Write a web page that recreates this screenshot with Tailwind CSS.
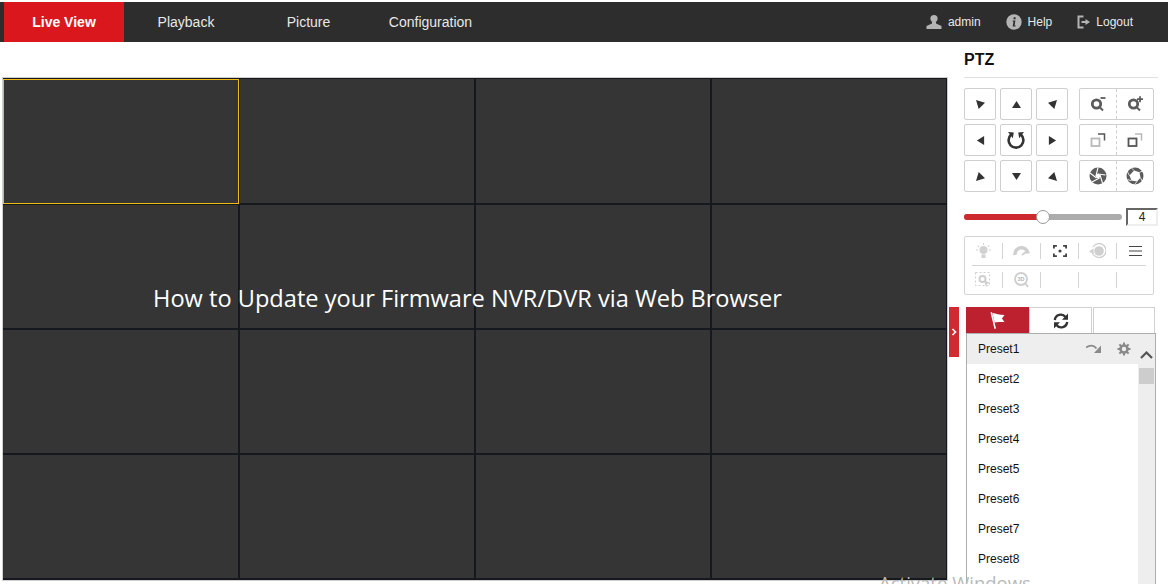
<!DOCTYPE html>
<html lang="en">
<head>
  <meta charset="UTF-8">
  <title>Live View</title>
  <script src="https://cdn.jsdelivr.net/npm/@tailwindcss/browser@4"></script>
</head>
<body class="relative w-[1168px] h-[584px] overflow-hidden bg-white font-['Liberation_Sans',Arial,sans-serif]">
  <!-- top nav -->
  <header class="mt-[2px] h-[40px] bg-[#2d2d2d] flex items-center text-[14px] text-[#e8e8e8]">
    <a class="ml-[4px] w-[120px] h-full bg-[#da171d] flex items-center justify-center font-bold text-white">Live View</a>
    <a class="w-[124px] text-center">Playback</a>
    <a class="w-[121px] text-center">Picture</a>
    <a class="w-[123px] text-center">Configuration</a>
    <div class="ml-auto flex items-center text-[12px] mr-[35px]">
      <svg class="w-[16px] h-[16px] mr-[6px]" viewBox="0 0 16 16" fill="#b4b4b4"><circle cx="8" cy="4.6" r="3.6"/><path d="M6 8h4v1.6l5.5 2.4V15H.5v-3L6 9.6z"/></svg>
      <span>admin</span>
      <svg class="w-[16px] h-[16px] ml-[25px] mr-[6px]" viewBox="0 0 16 16"><circle cx="8" cy="8" r="7.7" fill="#b4b4b4"/><path d="M7.6 3.2h2v2h-2zM6.8 6.6h2.6L8.6 11.6h1v1H6.7l.8-5h-.9z" fill="#2d2d2d"/></svg>
      <span>Help</span>
      <svg class="w-[13px] h-[14px] ml-[25px] mr-[6px]" viewBox="0 0 13 14" fill="none" stroke="#b4b4b4" stroke-width="2"><path d="M6.500 1.500H1.500v11h5"/><path d="M4.500 7h4.500"/><path d="M8.500 4l4.500 3-4.500 3z" fill="#b4b4b4" stroke="none"/></svg>
      <span>Logout</span>
    </div>
  </header>

  <main class="flex">
    <!-- video grid -->
    <section class="ml-[2px] mt-[35px] w-[946px] h-[504px] shrink-0 border border-[#cfcfcf] bg-[#15191d] pt-[1px]">
      <div class="grid grid-cols-[235px_234px_234px_234px] grid-rows-[124px_123px_123px_123px] gap-[2px]">
        <div class="bg-[#353535] w-[236px] h-[125px] border border-[#f0bc13] z-10"></div>
        <div class="bg-[#353535]"></div><div class="bg-[#353535]"></div><div class="bg-[#353535]"></div>
        <div class="bg-[#353535]"></div><div class="bg-[#353535]"></div><div class="bg-[#353535]"></div><div class="bg-[#353535]"></div>
        <div class="bg-[#353535]"></div><div class="bg-[#353535]"></div><div class="bg-[#353535]"></div><div class="bg-[#353535]"></div>
        <div class="bg-[#353535]"></div><div class="bg-[#353535]"></div><div class="bg-[#353535]"></div><div class="bg-[#353535]"></div>
      </div>
    </section>

    <!-- collapse handle -->
    <div class="mt-[265px] ml-[1px] w-[10px] h-[50px] bg-[#cf2a30] flex items-center justify-center shrink-0">
      <svg class="w-[6px] h-[8px]" viewBox="0 0 6 8" fill="none" stroke="#fff" stroke-width="1.6"><path d="M1.5 1l3 3-3 3"/></svg>
    </div>

    <!-- ptz panel -->
    <aside class="ml-[5px] w-[195px] shrink-0">
      <h2 class="mt-[9px] w-[194px] h-[27px] text-[16px] leading-[18px] font-bold text-[#111] border-b border-[#e0e0e0]">PTZ</h2>

      <div class="mt-[10px] flex">
        <div class="grid grid-cols-[repeat(3,32px)] grid-rows-[repeat(3,32px)] gap-[4px]">
          <button class="border border-[#cfcfcf] rounded-[2px] flex items-center justify-center"><svg class="w-[9px] h-[9px]" viewBox="0 0 10 10" fill="#333"><path d="M0 0l10 3-7 7z"/></svg></button>
          <button class="border border-[#cfcfcf] rounded-[2px] flex items-center justify-center"><svg class="w-[9px] h-[9px]" viewBox="0 0 10 10" fill="#333"><path d="M5 1l5 8H0z"/></svg></button>
          <button class="border border-[#cfcfcf] rounded-[2px] flex items-center justify-center"><svg class="w-[9px] h-[9px]" viewBox="0 0 10 10" fill="#333"><path d="M10 0L0 3l7 7z"/></svg></button>
          <button class="border border-[#cfcfcf] rounded-[2px] flex items-center justify-center"><svg class="w-[9px] h-[9px]" viewBox="0 0 10 10" fill="#333"><path d="M1 5l8-5v10z"/></svg></button>
          <button class="border border-[#cfcfcf] rounded-[2px] flex items-center justify-center"><svg class="w-[20px] h-[20px]" viewBox="0 0 20 20" fill="none" stroke="#333" stroke-width="2.6"><path d="M5.200 4.600a7.400 7.400 0 1 0 9.600 0"/><path d="M2 2l5.800.6-1 5.600zM18 2l-5.800.6 1 5.600z" fill="#333" stroke="none"/></svg></button>
          <button class="border border-[#cfcfcf] rounded-[2px] flex items-center justify-center"><svg class="w-[9px] h-[9px]" viewBox="0 0 10 10" fill="#333"><path d="M9 5L1 0v10z"/></svg></button>
          <button class="border border-[#cfcfcf] rounded-[2px] flex items-center justify-center"><svg class="w-[9px] h-[9px]" viewBox="0 0 10 10" fill="#333"><path d="M0 10l10-3L3 0z"/></svg></button>
          <button class="border border-[#cfcfcf] rounded-[2px] flex items-center justify-center"><svg class="w-[9px] h-[9px]" viewBox="0 0 10 10" fill="#333"><path d="M5 9l5-8H0z"/></svg></button>
          <button class="border border-[#cfcfcf] rounded-[2px] flex items-center justify-center"><svg class="w-[9px] h-[9px]" viewBox="0 0 10 10" fill="#333"><path d="M10 10L0 7l7-7z"/></svg></button>
        </div>

        <div class="ml-[11px] w-[75px] grid grid-rows-[repeat(3,32px)] gap-[4px]">
          <div class="flex border border-[#cfcfcf] rounded-[2px]">
            <div class="flex-1 flex items-center justify-center border-r border-dashed border-[#cfcfcf]"><svg class="w-[16px] h-[16px]" viewBox="0 0 16 16" fill="none" stroke="#5c5c5c" stroke-width="2.800"><circle cx="6.500" cy="8" r="4.200"/><path d="M9.500 11l3.500 3.500" stroke-width="2"/><path d="M10.500 2h5" stroke-width="1.800"/></svg></div>
            <div class="flex-1 flex items-center justify-center"><svg class="w-[16px] h-[16px]" viewBox="0 0 16 16" fill="none" stroke="#5c5c5c" stroke-width="2.800"><circle cx="6.500" cy="8" r="4.200"/><path d="M9.500 11l3.500 3.500" stroke-width="2"/><path d="M10 3.200h6M13 .2v6" stroke-width="1.800"/></svg></div>
          </div>
          <div class="flex border border-[#cfcfcf] rounded-[2px]">
            <div class="flex-1 flex items-center justify-center border-r border-dashed border-[#cfcfcf]"><svg class="w-[16px] h-[16px]" viewBox="0 0 16 16" fill="none"><rect x="1.500" y="6.500" width="8" height="7.500" stroke="#b8b8b8" stroke-width="1.800"/><path d="M8 2h6.500v6.500" stroke="#555" stroke-width="1.500"/></svg></div>
            <div class="flex-1 flex items-center justify-center"><svg class="w-[16px] h-[16px]" viewBox="0 0 16 16" fill="none"><rect x="1.500" y="6.500" width="8" height="7.500" stroke="#555" stroke-width="1.800"/><path d="M8 2h6.500v6.500" stroke="#b8b8b8" stroke-width="1.500"/></svg></div>
          </div>
          <div class="flex border border-[#cfcfcf] rounded-[2px]">
            <div class="flex-1 flex items-center justify-center border-r border-dashed border-[#cfcfcf]"><svg class="w-[18px] h-[18px]" viewBox="0 0 18 18"><circle cx="9" cy="9" r="8.500" fill="#5c5c5c"/><path d="M7 9L9 .5M9 7l7.500 1M11 8l2.500 8M10.500 11L3 15M7.500 11L1 6" stroke="#fff" stroke-width="1.100"/><path d="M9 6.500l2.400 1.700-.9 2.800h-3l-.9-2.800z" fill="#fff"/></svg></div>
            <div class="flex-1 flex items-center justify-center"><svg class="w-[18px] h-[18px]" viewBox="0 0 18 18"><circle cx="9" cy="9" r="8.500" fill="#5c5c5c"/><path d="M8 3.500l5.500 1.800 1 5.500-3.500 3.800-5.500-1-2-5z" fill="#fff"/><path d="M8 3.500L5 .5M13.500 5.300L17 4M14.500 10.800l2 4M11 14.600l-3 3.400M5.500 13.600l-4-1M3.500 8.600L1 4" stroke="#fff" stroke-width=".8"/></svg></div>
          </div>
        </div>
      </div>

      <!-- speed slider -->
      <div class="mt-[16px] flex items-center h-[18px]">
        <div class="relative w-[158px] h-[6px] rounded-full bg-[#acacac]">
          <div class="w-[79px] h-full rounded-l-full bg-[#cd2a30]"></div>
          <div class="absolute left-[72px] top-[-4px] w-[14px] h-[14px] rounded-full bg-white border border-[#999]"></div>
        </div>
        <div class="ml-[4px] w-[32px] h-[18px] border-2 border-[#eeeeee] border-t-[#666] border-l-[#666] text-[12px] leading-[14px] text-center text-[#222]">4</div>
      </div>

      <!-- function buttons -->
      <div class="mt-[10px] w-[190px] h-[59px] border border-[#d4d4d4] rounded-[2px]">
        <div class="h-[28px] grid grid-cols-[38px_38px_38px_38px_36px] items-center">
          <div class="h-[16px] flex items-center justify-center border-r border-[#d4d4d4]"><svg class="w-[17px] h-[16px]" viewBox="0 0 17 16" fill="#d2d2d2"><circle cx="8.500" cy="7" r="4"/><rect x="6.500" y="11.500" width="4" height="3.500"/><path d="M8 0h1v2H8zM1 6.500h2v1H1zM14 6.500h2v1h-2zM3 2l1.500 1.500-.7.7L2.300 2.700zM14 2l-1.500 1.500.7.7 1.500-1.500z"/></svg></div>
          <div class="h-[16px] flex items-center justify-center border-r border-[#d4d4d4]"><svg class="w-[17px] h-[14px]" viewBox="0 0 17 14" fill="none" stroke="#cfcfcf"><path d="M2 11a6.500 6.500 0 0 1 13-1.500" stroke-width="3.600"/><path d="M9 11l4-3" stroke-width="1.800"/></svg></div>
          <div class="h-[16px] flex items-center justify-center border-r border-[#d4d4d4]"><svg class="w-[14px] h-[12px]" viewBox="0 0 14 12" fill="none" stroke="#444" stroke-width="1.800"><path d="M.9 3.500V.9h3M10.100.9h3v2.600M13.100 8.500v2.600h-3M3.900 11.100h-3V8.500"/><circle cx="7" cy="6" r="1.600" fill="#444" stroke="none"/></svg></div>
          <div class="h-[16px] flex items-center justify-center border-r border-[#d4d4d4]"><svg class="w-[17px] h-[16px]" viewBox="0 0 17 16"><circle cx="10" cy="8" r="4.800" fill="#cfcfcf"/><path d="M4 4a7 7 0 1 1-.5 6" fill="none" stroke="#cfcfcf" stroke-width="1.300"/><path d="M0 8.500l4.500-3v5.500z" fill="#cfcfcf"/></svg></div>
          <div class="h-[16px] flex items-center justify-center"><svg class="w-[13px] h-[10px]" viewBox="0 0 13 10" stroke="#444"><path d="M0 .5h13M0 5h13M0 9.500h13"/></svg></div>
        </div>
        <div class="mx-[7px] h-[1px] bg-[#d4d4d4]"></div>
        <div class="h-[28px] grid grid-cols-[38px_38px_38px_38px_36px] items-center">
          <div class="h-[16px] flex items-center justify-center border-r border-[#d4d4d4]"><svg class="w-[17px] h-[16px]" viewBox="0 0 17 16" fill="none" stroke="#cfcfcf"><rect x=".5" y=".5" width="14" height="13" stroke-dasharray="2 2"/><circle cx="7.500" cy="7" r="3" stroke-width="2"/><path d="M9 8l6 3-3 1-1 3z" fill="#cfcfcf" stroke="none"/></svg></div>
          <div class="h-[16px] flex items-center justify-center border-r border-[#d4d4d4]"><svg class="w-[15px] h-[16px]" viewBox="0 0 15 16" fill="none" stroke="#cfcfcf"><circle cx="7" cy="7" r="6" stroke-width="1.800"/><path d="M11 11l3 4" stroke-width="1.800"/><text x="7" y="9" font-size="5.500" fill="#b5b5b5" stroke="none" text-anchor="middle" font-weight="bold">3D</text></svg></div>
          <div class="h-[16px] border-r border-[#d4d4d4]"></div>
          <div class="h-[16px] border-r border-[#d4d4d4]"></div>
          <div class="h-[16px]"></div>
        </div>
      </div>

      <!-- preset tabs -->
      <div class="mt-[12px] ml-[2px] w-[189px] h-[26px] flex">
        <div class="w-[63px] bg-[#bd202e] flex items-center justify-center"><svg class="w-[15px] h-[17px]" viewBox="0 0 15 17" fill="#fff"><path d="M.5.500L2 0l4 16.500-1.500.5z"/><path d="M2.500 1c3.500.5 7 2 12 2-1 1.500-2 2.500-2.500 3.500.8 1.200 1.500 2.200 2.500 3.500-4 0-7.500 0-10 .5z"/></svg></div>
        <div class="w-[63px] border-t border-x border-[#d0d0d0] flex items-center justify-center"><svg class="w-[16px] h-[16px]" viewBox="0 0 16 16" fill="none" stroke="#333" stroke-width="2.400"><path d="M1.800 7a6 6 0 0 1 10.700-3M14.200 9a6 6 0 0 1-10.700 3"/><path d="M15 .5v6.200H9zM1 15.500V9.300h6z" fill="#333" stroke="none"/></svg></div>
        <div class="ml-[1px] w-[62px] border-t border-x border-[#d0d0d0]"></div>
      </div>

      <!-- preset list -->
      <div class="ml-[2px] w-[190px] h-[260px] border border-[#aeaeae] flex text-[12px] text-[#111]">
        <ul class="flex-1">
          <li class="h-[30px] pl-[11px] bg-[#eeeeee] flex items-center">
            <span>Preset1</span>
            <svg class="ml-[67px] w-[15px] h-[10px]" viewBox="0 0 15 10" fill="none" stroke="#8a8a8a" stroke-width="1.800"><path d="M0 3.500c4-3 8-2.500 10.500 1"/><path d="M15 1.500V9H8z" fill="#8a8a8a" stroke="none"/></svg>
            <svg class="ml-[16px] w-[14px] h-[14px]" viewBox="0 0 14 14" fill="none" stroke="#8a8a8a"><circle cx="7" cy="7" r="3.500" stroke-width="2.600"/><path d="M7 .5v2.500M7 11v2.500M.5 7H3M11 7h2.500M2.400 2.400l1.800 1.800M9.800 9.800l1.800 1.800M11.600 2.400L9.800 4.200M4.200 9.800l-1.800 1.800" stroke-width="2"/></svg>
          </li>
          <li class="h-[30px] pl-[11px] flex items-center">Preset2</li>
          <li class="h-[30px] pl-[11px] flex items-center">Preset3</li>
          <li class="h-[30px] pl-[11px] flex items-center">Preset4</li>
          <li class="h-[30px] pl-[11px] flex items-center">Preset5</li>
          <li class="h-[30px] pl-[11px] flex items-center">Preset6</li>
          <li class="h-[30px] pl-[11px] flex items-center">Preset7</li>
          <li class="h-[30px] pl-[11px] flex items-center">Preset8</li>
        </ul>
        <div class="w-[17px] bg-[#eeeeee] flex flex-col items-center">
          <svg class="mt-[17px] w-[13px] h-[8px]" viewBox="0 0 13 8" fill="none" stroke="#555" stroke-width="2.200"><path d="M1 7l5.500-5.500L12 7"/></svg>
          <div class="mt-[9px] w-[15px] h-[16px] bg-[#cdcdcd]"></div>
        </div>
      </div>
    </aside>
  </main>

  <!-- overlay title + windows watermark -->
  <div class="absolute left-[153px] top-[282px] text-[23.6px] leading-[32px] text-white font-['Open_Sans',sans-serif] whitespace-nowrap">How to Update your Firmware NVR/DVR via Web Browser</div>
  <div class="absolute left-[879px] top-[571px] text-[18.5px] leading-[24px] text-[#b9b9b9] font-['Open_Sans',sans-serif] whitespace-nowrap">Activate Windows</div>
</body>
</html>
